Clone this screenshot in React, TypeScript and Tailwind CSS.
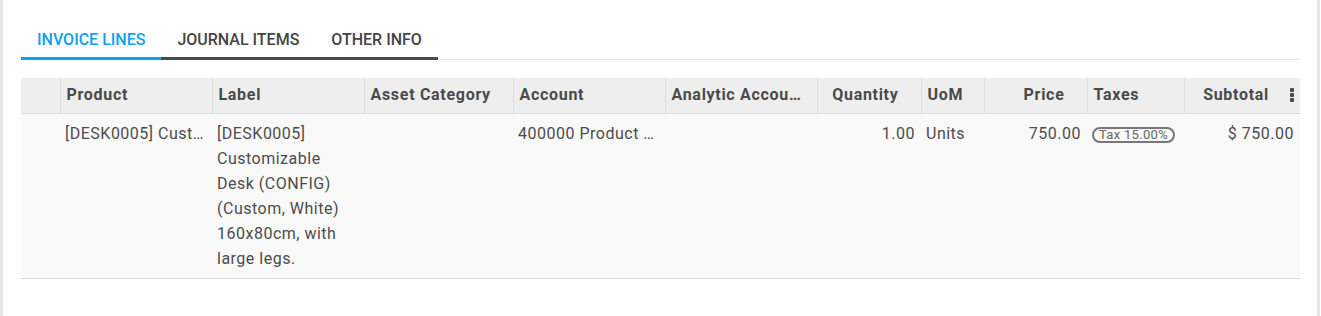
import React from 'react';

const font = { fontFamily: 'Roboto, "Liberation Sans", sans-serif' };

interface Col {
    label: string;
    width: string;
    align: 'left' | 'right';
}

const columns: Col[] = [
    { label: '', width: 'w-[39px]', align: 'left' },
    { label: 'Product', width: 'w-[152px]', align: 'left' },
    { label: 'Label', width: 'w-[152px]', align: 'left' },
    { label: 'Asset Category', width: 'w-[149px]', align: 'left' },
    { label: 'Account', width: 'w-[152px]', align: 'left' },
    { label: 'Analytic Account', width: 'w-[152px]', align: 'left' },
    { label: 'Quantity', width: 'w-[104px]', align: 'right' },
    { label: 'UoM', width: 'w-[63px]', align: 'left' },
    { label: 'Price', width: 'w-[103px]', align: 'right' },
    { label: 'Taxes', width: 'w-[97px]', align: 'left' },
    { label: 'Subtotal', width: 'w-[116px]', align: 'right' },
];

const tabs = [
    { name: 'INVOICE LINES', active: true },
    { name: 'JOURNAL ITEMS', active: false },
    { name: 'OTHER INFO', active: false },
];

function Kebab() {
    return (
        <svg width="4" height="14" viewBox="0 0 4 14" className="block">
            <rect x="0" y="0" width="4" height="4" rx="0.8" fill="#4c4c4c" />
            <rect x="0" y="5" width="4" height="4" rx="0.8" fill="#4c4c4c" />
            <rect x="0" y="10" width="4" height="4" rx="0.8" fill="#4c4c4c" />
        </svg>
    );
}

export default function App() {
    return (
        <div className="flex h-[316px] w-[1321px] bg-white" style={font}>
            <div className="w-[3px] bg-[#e8e8ea]" />
            <div className="w-[1279px] ml-[18px] pt-[20px]">
                {/* tabs */}
                <div className="flex border-b border-[#dee2e6]">
                    {tabs.map((t) => (
                        <div
                            key={t.name}
                            className={
                                t.active
                                    ? 'px-[16px] pt-[10px] pb-[7px] text-[16px] leading-[20px] font-medium text-[#0ea2ee] border-b-[3px] border-[#0ea2ee] -mb-px'
                                    : 'px-[16px] pt-[10px] pb-[7px] text-[16px] leading-[20px] font-medium text-[#444444] border-b-[3px] border-[#4a4a4a] -mb-px'
                            }
                        >
                            {t.name}
                        </div>
                    ))}
                </div>

                {/* lines table */}
                <table className="mt-[18px] w-[1279px] table-fixed border-collapse text-[16px] tracking-[0.5px] text-[#4c4c4c]">
                    <colgroup>
                        {columns.map((c, i) => (
                            <col key={i} className={c.width} />
                        ))}
                    </colgroup>
                    <thead>
                        <tr className="bg-[#eeeeee] h-[35px] border-b border-[#dfdfe3]">
                            {columns.map((c, i) => (
                                <th
                                    key={i}
                                    className={
                                        (i > 0 ? 'border-l border-[#dcdcdc] ' : '') +
                                        (c.align === 'right'
                                            ? i === columns.length - 1
                                                ? 'text-right pl-[6px] pr-[6px] '
                                                : 'text-right pl-[6px] pr-[22px] '
                                            : 'text-left pl-[6px] pr-[14px] ') +
                                        'font-bold tracking-[0.7px] text-[#4a4a4a] whitespace-nowrap overflow-hidden text-ellipsis leading-[20px]'
                                    }
                                >
                                    {i === columns.length - 1 ? (
                                        <div className="flex items-center justify-end gap-[21px]">
                                            <span>{c.label}</span>
                                            <Kebab />
                                        </div>
                                    ) : (
                                        c.label
                                    )}
                                </th>
                            ))}
                        </tr>
                    </thead>
                    <tbody>
                        <tr className="bg-[#f9f9f9] border-b border-[#dcdce2] align-top leading-[25px]">
                            <td className="py-[7px]" />
                            <td className="py-[7px] px-[5px] whitespace-nowrap overflow-hidden text-ellipsis">
                                [DESK0005] Customizable Desk (CONFIG)
                            </td>
                            <td className="py-[7px] px-[5px] whitespace-nowrap">
                                [DESK0005]
                                <br />
                                Customizable
                                <br />
                                Desk (CONFIG)
                                <br />
                                (Custom, White)
                                <br />
                                160x80cm, with
                                <br />
                                large legs.
                            </td>
                            <td className="py-[7px] px-[6px]" />
                            <td className="py-[7px] px-[5px] whitespace-nowrap overflow-hidden text-ellipsis">
                                400000 Product Sales
                            </td>
                            <td className="py-[7px] px-[6px]" />
                            <td className="py-[7px] px-[6px] text-right">1.00</td>
                            <td className="py-[7px] px-[5px]">Units</td>
                            <td className="py-[7px] px-[6px] text-right">750.00</td>
                            <td className="py-[7px] px-[5px]">
                                <span className="inline-flex items-center h-[16px] mt-[4px] px-[5px] rounded-full border-2 border-[#777777] text-[13px] leading-[12px] tracking-[0.3px] text-[#666666] whitespace-nowrap">
                                    Tax 15.00%
                                </span>
                            </td>
                            <td className="py-[7px] px-[6px] text-right whitespace-nowrap">
                                $ 750.00
                            </td>
                        </tr>
                    </tbody>
                </table>
            </div>
            <div className="flex-1" />
            <div className="w-[3px] mr-[1px] bg-[#e8e8ea]" />
        </div>
    );
}
